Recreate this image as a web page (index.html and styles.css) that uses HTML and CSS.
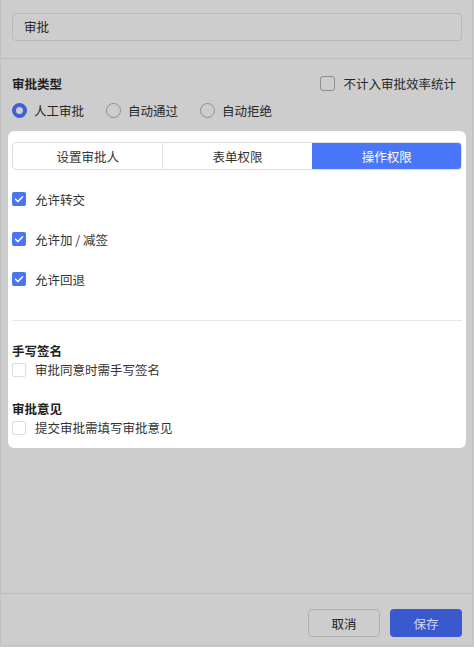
FILE: index.html
```html
<!DOCTYPE html>
<html lang="zh-CN">
<head>
<meta charset="utf-8">
<title>审批</title>
<link rel="stylesheet" href="styles.css">
</head>
<body>
<div class="dialog">
  <div class="top">
    <div class="input">审批</div>
  </div>
  <div class="form">
    <div class="type-row">
      <span class="title">审批类型</span>
      <label class="dim-check"><span class="dim-box"></span><span>不计入审批效率统计</span></label>
    </div>
    <div class="radio-row">
      <label class="radio"><span class="dot checked"></span><span>人工审批</span></label>
      <label class="radio"><span class="dot"></span><span>自动通过</span></label>
      <label class="radio"><span class="dot"></span><span>自动拒绝</span></label>
    </div>
    <div class="card">
      <div class="tabs">
        <div class="tab">设置审批人</div>
        <div class="tab">表单权限</div>
        <div class="tab active">操作权限</div>
      </div>
      <div class="perm-list">
        <label class="check"><span class="box on"><svg viewBox="0 0 14 14" width="14" height="14"><path d="M3.5 7.2 L6 9.6 L10.6 4.8" fill="none" stroke="#fff" stroke-width="1.5" stroke-linecap="round" stroke-linejoin="round"/></svg></span><span>允许转交</span></label>
        <label class="check"><span class="box on"><svg viewBox="0 0 14 14" width="14" height="14"><path d="M3.5 7.2 L6 9.6 L10.6 4.8" fill="none" stroke="#fff" stroke-width="1.5" stroke-linecap="round" stroke-linejoin="round"/></svg></span><span>允许加 / 减签</span></label>
        <label class="check"><span class="box on"><svg viewBox="0 0 14 14" width="14" height="14"><path d="M3.5 7.2 L6 9.6 L10.6 4.8" fill="none" stroke="#fff" stroke-width="1.5" stroke-linecap="round" stroke-linejoin="round"/></svg></span><span>允许回退</span></label>
      </div>
      <div class="sep"></div>
      <div class="group">
        <div class="group-title">手写签名</div>
        <label class="check small"><span class="box"></span><span>审批同意时需手写签名</span></label>
      </div>
      <div class="group">
        <div class="group-title">审批意见</div>
        <label class="check small"><span class="box"></span><span>提交审批需填写审批意见</span></label>
      </div>
    </div>
  </div>
  <div class="footer">
    <button class="btn cancel">取消</button>
    <button class="btn save">保存</button>
  </div>
</div>
</body>
</html>
```

FILE: styles.css
```css
* { box-sizing: border-box; }
html, body {
  margin: 0;
  padding: 0;
  background: #cdcdcd;
  font-family: "Noto Sans CJK SC", "Noto Sans", sans-serif;
  font-size: 12.5px;
  color: #262626;
}
.dialog {
  width: 473px;
  height: 646px;
  border: 1px solid #c2c2c2;
  border-top: none;
  display: flex;
  flex-direction: column;
  background: #cdcdcd;
}
.top {
  padding: 13px 10px 17px 11px;
  border-bottom: 1px solid #bdbdbd;
}
.input {
  height: 28px;
  border: 1px solid #b9b9b9;
  border-radius: 4px;
  padding-left: 11px;
  line-height: 26px;
  color: #262626;
}
.form {
  padding: 14px 10px 0 11px;
}
.type-row {
  height: 20px;
  display: flex;
  align-items: center;
  justify-content: space-between;
}
.title {
  font-weight: 700;
  color: #1f1f1f;
}
.dim-check {
  display: flex;
  align-items: center;
  gap: 8px;
  margin-right: 6px;
}
.dim-box {
  width: 15px;
  height: 15px;
  border: 1px solid #8e8e8e;
  border-radius: 3px;
}
.radio-row {
  margin-top: 7px;
  height: 20px;
  display: flex;
  align-items: center;
}
.radio {
  display: flex;
  align-items: center;
  gap: 7px;
  margin-right: 22px;
}
.dot {
  width: 15px;
  height: 15px;
  border-radius: 50%;
  border: 1px solid #8f8f8f;
}
.dot.checked {
  border: 4px solid #3f5fd6;
  background: #cdcdcd;
}
.card {
  margin: 11px -4px 0 -4px;
  background: #fff;
  border-radius: 6px;
  padding: 11px 4px 11px 4px;
  color: #333;
}
.tabs {
  display: grid;
  grid-template-columns: 1fr 1fr 1fr;
  height: 28px;
  border: 1px solid #dedede;
  border-radius: 4px;
  overflow: hidden;
}
.tab {
  display: flex;
  align-items: center;
  justify-content: center;
  color: #333;
  border-left: 1px solid #e2e2e2;
}
.tab:first-child { border-left: none; }
.tab.active {
  background: #4a76fa;
  color: #fff;
  border-left: none;
  margin: -1px -1px -1px 0;
}
.perm-list {
  display: flex;
  flex-direction: column;
  gap: 20px;
  margin-top: 19px;
}
.check {
  height: 20px;
  display: flex;
  align-items: center;
  gap: 9px;
}
.check.small { height: 19px; }
.box {
  width: 14px;
  height: 14px;
  border: 1px solid #dcdcdc;
  border-radius: 2px;
  flex: none;
  display: flex;
}
.box.on {
  background: #4a76f5;
  border: none;
}
.box svg { display: block; }
.sep {
  margin-top: 31px;
  border-top: 1px solid #e6e6e6;
}
.group { margin-top: 20px; }
.group + .group { margin-top: 20px; }
.group-title {
  height: 19px;
  line-height: 19px;
  font-weight: 700;
  color: #222;
}
.footer {
  margin-top: auto;
  border-top: 1px solid #bdbdbd;
  padding: 15px 10px 8px 0;
  display: flex;
  justify-content: flex-end;
  gap: 10px;
}
.btn {
  width: 72px;
  height: 28px;
  border-radius: 4px;
  font-family: inherit;
  font-size: 12.5px;
  padding: 0;
}
.cancel {
  background: #cdcdcd;
  border: 1px solid #b2b2b2;
  color: #222;
}
.save {
  background: #3a59cf;
  border: none;
  color: #d2d8ef;
}
```
